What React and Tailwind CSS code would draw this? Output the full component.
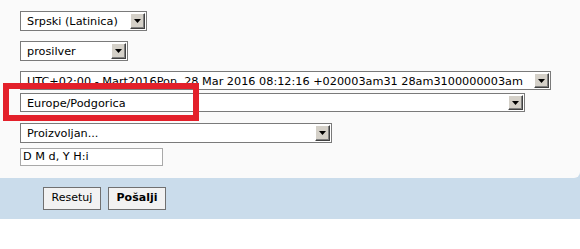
import React from "react"

function Arrow() {
  return (
    <div className="flex h-full w-[15px] shrink-0 items-center justify-center border border-t-white border-l-white border-r-[#404040] border-b-[#404040] bg-[#d4d0c8] shadow-[inset_-1px_-1px_0_#808080]">
      <svg width="7" height="4" viewBox="0 0 7 4">
        <path d="M0 0h7L3.5 4z" fill="#000" />
      </svg>
    </div>
  )
}

function Select({ label, w, h = "h-[20px]" }) {
  return (
    <div className={`flex ${h} ${w} items-stretch border border-[#7a7a7a] bg-white p-[1px]`}>
      <div className="flex-1 overflow-hidden whitespace-nowrap pl-[5px] leading-[17px]">{label}</div>
      <Arrow />
    </div>
  )
}

export default function App() {
  return (
    <div className="relative min-h-[249px] w-[580px] bg-white font-['DejaVu_Sans',Verdana,sans-serif] text-[11.25px] text-black">
      <div className="bg-[#cadceb]">
        <div className="flex flex-col rounded-br-[6px] bg-[#fafafa] pl-[20px] pt-[11px] pb-[12px]">
          <Select label="Srpski (Latinica)" w="w-[127px]" />
          <div className="h-[10px]" />
          <Select label="prosilver" w="w-[108px]" />
          <div className="h-[10px]" />
          <Select
            label="UTC+02:00 - Mart2016Pon. 28 Mar 2016 08:12:16 +020003am31 28am3100000003am"
            w="w-[531px]"
            h="h-[19px]"
          />
          <div className="h-[3px]" />
          <Select label="Europe/Podgorica" w="w-[505px]" h="h-[19px]" />
          <div className="h-[11px]" />
          <Select label="Proizvoljan..." w="w-[312px]" />
          <div className="h-[5px]" />
          <div className="flex h-[18px] w-[143px] items-center border border-[#a9a9a9] bg-white pl-[2px]">
            D M d, Y H:i
          </div>
        </div>
        <div className="flex h-[41px] items-center gap-[7px] pl-[43px]">
          <button className="h-[23px] w-[58px] border border-[#707070] bg-[#f2f2f2] text-[11px]">Resetuj</button>
          <button className="h-[23px] w-[58px] border border-[#707070] bg-[#f2f2f2] text-[11px] font-bold">Pošalji</button>
        </div>
      </div>
      <div className="pointer-events-none absolute left-[3px] top-[83px] h-[38px] w-[196px] border-[6px] border-[#e3202a]" />
    </div>
  )
}
